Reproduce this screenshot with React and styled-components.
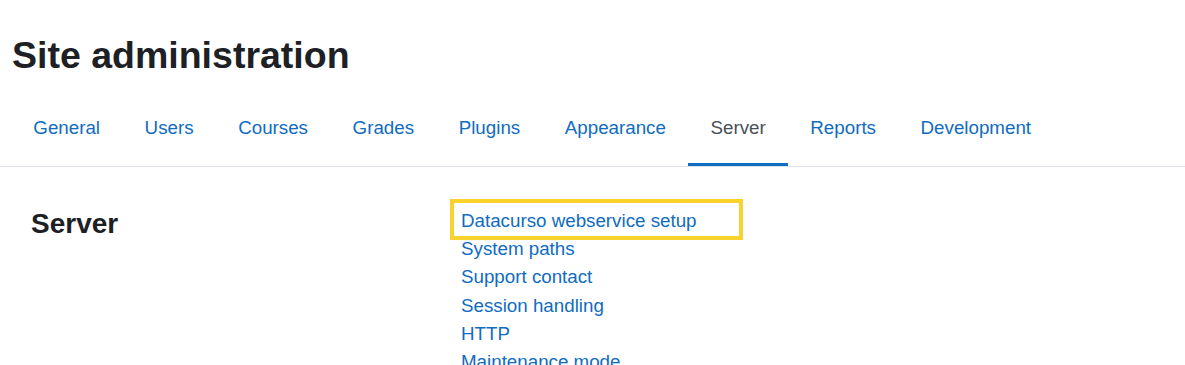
import styled, { createGlobalStyle } from "styled-components"

const GlobalStyle = createGlobalStyle`
    body {
        margin: 0;
        background: #fff;
        font-family: "Liberation Sans", Arial, sans-serif;
        color: #1d2125;
    }
`

const Page = styled.div`
    width: 1185px;
    height: 365px;
    overflow: hidden;
`

const Title = styled.h1`
    margin: 0;
    padding: 33px 12px 0;
    font-size: 37.5px;
    line-height: 45px;
    font-weight: 700;
    color: #1d2125;
`

const Tabs = styled.ul`
    list-style: none;
    margin: 14px 0 0;
    padding: 0 11px;
    display: flex;
    border-bottom: 1px solid #dee2e6;
`

const Tab = styled.li`
    padding: 22px 22.3px 21px 22.3px;
    font-size: 18.75px;
    line-height: 28px;
    color: ${props => props.active ? "#495057" : "#0f6cbf"};
    border-bottom: 3px solid ${props => props.active ? "#0f6cbf" : "transparent"};
    cursor: pointer;
`

const Section = styled.div`
    display: grid;
    grid-template-columns: 430px 1fr;
    padding: 40px 0 0 31px;
`

const Heading = styled.h3`
    margin: 0;
    font-size: 28px;
    line-height: 34px;
    font-weight: 700;
`

const LinkList = styled.ul`
    list-style: none;
    margin: 0;
    padding: 0;
    position: relative;
`

const LinkItem = styled.li`
    font-size: 18.75px;
    line-height: 28.2px;
    color: #0f6cbf;
    cursor: pointer;
`

/* annotation box drawn over the first link */
const Highlight = styled.div`
    position: absolute;
    left: -11px;
    top: -8px;
    width: 285px;
    height: 33px;
    border: 4px solid #f9d22e;
    pointer-events: none;
`

const tabs = ["General", "Users", "Courses", "Grades", "Plugins", "Appearance", "Server", "Reports", "Development"]

const links = [
    "Datacurso webservice setup",
    "System paths",
    "Support contact",
    "Session handling",
    "HTTP",
    "Maintenance mode",
]

const App = () => {
    return (
        <Page>
            <GlobalStyle />
            <Title>Site administration</Title>
            <Tabs>
                {tabs.map((t) => (
                    <Tab key={t} active={t === "Server"}>{t}</Tab>
                ))}
            </Tabs>
            <Section>
                <Heading>Server</Heading>
                <LinkList>
                    <Highlight />
                    {links.map((l) => (
                        <LinkItem key={l}>{l}</LinkItem>
                    ))}
                </LinkList>
            </Section>
        </Page>
    )
}

export default App
